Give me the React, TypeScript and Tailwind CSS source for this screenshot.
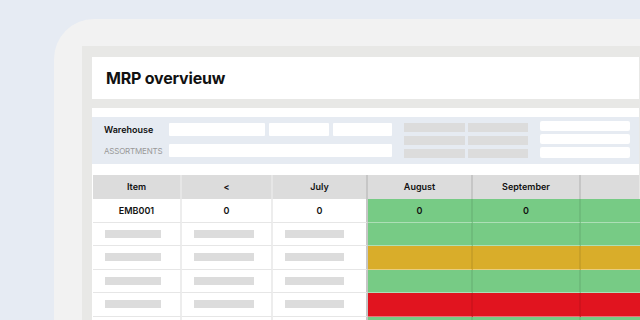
import React from 'react'

const cols = [89, 91, 95, 105, 108, 200]
const bars = [56, 60, 59]

type Row = { cells: string[]; color: string }

const GREEN = 'bg-[#77cb85]'
const YELLOW = 'bg-[#d9ad2a]'
const RED = 'bg-[#e1141f]'

const rows: Row[] = [
  { cells: ['EMB001', '0', '0', '0', '0', ''], color: GREEN },
  { cells: [], color: GREEN },
  { cells: [], color: YELLOW },
  { cells: [], color: GREEN },
  { cells: [], color: RED },
  { cells: [], color: GREEN },
]

const headers = ['Item', '<', 'July', 'August', 'September', '']

export default function App() {
  return (
    <div
      className="w-[640px] h-[320px] overflow-hidden bg-[#e6ebf3] pt-[19px] pl-[54px]"
      style={{ fontFamily: 'Inter, "Liberation Sans", sans-serif' }}
    >
      <div className="h-full bg-[#f2f2f2] rounded-tl-[40px] pt-[27px] pl-[28px]">
        <div className="h-full bg-[#e8e8e6] pt-[11px] pl-[10px] pr-[1px]">
          {/* title card */}
          <div className="h-[42px] bg-white flex items-center pl-[14px]">
            <h1 className="text-[16px] font-bold text-[#111] tracking-[-0.2px]">MRP overvieuw</h1>
          </div>

          {/* main panel */}
          <div className="mt-[9px] bg-white pt-[9px] h-full">
            {/* filters */}
            <div className="h-[47px] bg-[#e6ebf2] flex pl-[12px] pt-[6px]">
              <div className="flex flex-col gap-[8px]">
                <div className="h-[13px] flex items-center">
                  <span className="w-[65px] text-[9px] font-semibold text-[#111]">Warehouse</span>
                  <div className="w-[96px] h-[13px] bg-white rounded-[1px]" />
                  <div className="ml-[4px] w-[60px] h-[13px] bg-white rounded-[1px]" />
                  <div className="ml-[4px] w-[59px] h-[13px] bg-white rounded-[1px]" />
                </div>
                <div className="h-[13px] flex items-center">
                  <span className="w-[65px] text-[8px] text-[#999] tracking-[-0.2px]">ASSORTMENTS</span>
                  <div className="w-[223px] h-[13px] bg-white rounded-[1px]" />
                </div>
              </div>
              <div className="ml-[12px] grid grid-cols-[61px_60px] gap-x-[3px] gap-y-[4px] content-start">
                {Array.from({ length: 6 }).map((_, i) => (
                  <div key={i} className="h-[9px] bg-[#dcdcdc]" />
                ))}
              </div>
              <div className="ml-[12px] -mt-[2px] flex flex-col gap-[3px]">
                <div className="w-[90px] h-[10px] bg-white rounded-[2px]" />
                <div className="w-[90px] h-[10px] bg-white rounded-[2px]" />
                <div className="w-[90px] h-[11px] bg-white rounded-[2px]" />
              </div>
            </div>

            {/* table */}
            <div className="mt-[11px] ml-[1px]">
              <div className="flex h-[24px] bg-[#dcdcdc]">
                {headers.map((h, i) => (
                  <div
                    key={i}
                    style={{ width: cols[i] }}
                    className={`shrink-0 flex items-center justify-center text-[9px] font-semibold text-[#111] border-r-[2px] ${
                      i < 2 ? 'border-r-[#e6e6e6]' : 'border-r-[#c6c6c6]'
                    }`}
                  >
                    {h}
                  </div>
                ))}
              </div>
              {rows.map((r, ri) => (
                <div key={ri} className="flex h-[23.5px]">
                  {cols.map((w, ci) => {
                    const colored = ci >= 3
                    const placeholder = r.cells.length === 0 && !colored
                    return (
                      <div
                        key={ci}
                        style={{ width: w }}
                        className={`shrink-0 flex items-center text-[9px] font-semibold text-[#111] border-b ${
                          placeholder ? 'justify-start pl-[12px]' : 'justify-center'
                        } ${
                          colored
                            ? `${r.color} border-b-[rgba(255,255,255,0.4)] border-r-[2px] border-r-[rgba(0,0,0,0.07)]`
                            : `bg-white border-b-[#e6e6e6] border-r-[2px] ${ci === 2 ? 'border-r-[#c6c6c6]' : 'border-r-[#ededed]'}`
                        }`}
                      >
                        {placeholder ? (
                          <div className="h-[8px] bg-[#dcdcdc]" style={{ width: bars[ci] }} />
                        ) : (
                          r.cells[ci]
                        )}
                      </div>
                    )
                  })}
                </div>
              ))}
            </div>
          </div>
        </div>
      </div>
    </div>
  )
}
